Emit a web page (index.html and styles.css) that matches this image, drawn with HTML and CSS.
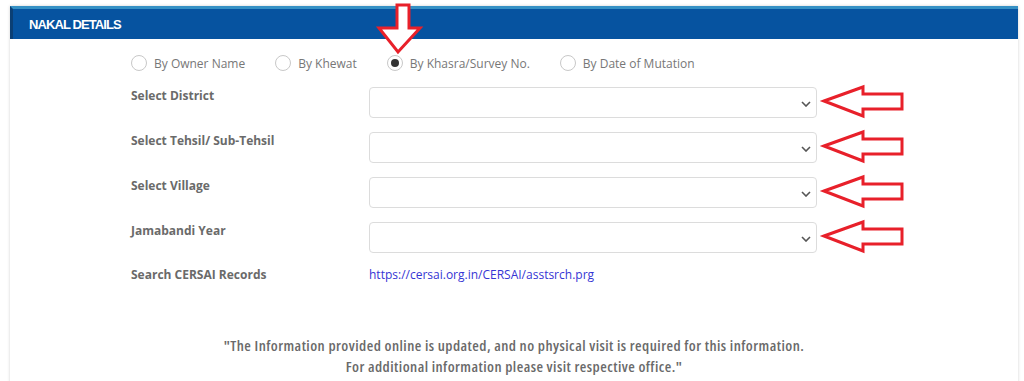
FILE: index.html
```html
<!DOCTYPE html>
<html lang="en">
<head>
<meta charset="utf-8">
<title>Nakal Details</title>
<link rel="stylesheet" href="styles.css">
</head>
<body>
<div class="page">
  <div class="panel">
    <div class="panel-head">NAKAL DETAILS</div>
    <div class="panel-body">
      <div class="radios">
        <label class="radio"><span class="dot"></span>By Owner Name</label>
        <label class="radio"><span class="dot"></span>By Khewat</label>
        <label class="radio"><span class="dot checked"></span>By Khasra/Survey No.</label>
        <label class="radio"><span class="dot"></span>By Date of Mutation</label>
      </div>

      <div class="form-row">
        <div class="label">Select District</div>
        <div class="select"><svg class="chev" viewBox="0 0 10 6" width="10" height="6"><path d="M1 1 L5 5 L9 1" fill="none" stroke="#555" stroke-width="1.6"/></svg></div>
        <svg class="arrow-left" viewBox="0 0 86 34" width="86" height="34"><path d="M4 16 L43 2 L43 9 L82 9 L82 24 L43 24 L43 31 Z" fill="#fff" stroke="#e8202a" stroke-width="3"/></svg>
      </div>

      <div class="form-row">
        <div class="label">Select Tehsil/ Sub-Tehsil</div>
        <div class="select"><svg class="chev" viewBox="0 0 10 6" width="10" height="6"><path d="M1 1 L5 5 L9 1" fill="none" stroke="#555" stroke-width="1.6"/></svg></div>
        <svg class="arrow-left" viewBox="0 0 86 34" width="86" height="34"><path d="M4 16 L43 2 L43 9 L82 9 L82 24 L43 24 L43 31 Z" fill="#fff" stroke="#e8202a" stroke-width="3"/></svg>
      </div>

      <div class="form-row">
        <div class="label">Select Village</div>
        <div class="select"><svg class="chev" viewBox="0 0 10 6" width="10" height="6"><path d="M1 1 L5 5 L9 1" fill="none" stroke="#555" stroke-width="1.6"/></svg></div>
        <svg class="arrow-left" viewBox="0 0 86 34" width="86" height="34"><path d="M4 16 L43 2 L43 9 L82 9 L82 24 L43 24 L43 31 Z" fill="#fff" stroke="#e8202a" stroke-width="3"/></svg>
      </div>

      <div class="form-row">
        <div class="label">Jamabandi Year</div>
        <div class="select"><svg class="chev" viewBox="0 0 10 6" width="10" height="6"><path d="M1 1 L5 5 L9 1" fill="none" stroke="#555" stroke-width="1.6"/></svg></div>
        <svg class="arrow-left" viewBox="0 0 86 34" width="86" height="34"><path d="M4 16 L43 2 L43 9 L82 9 L82 24 L43 24 L43 31 Z" fill="#fff" stroke="#e8202a" stroke-width="3"/></svg>
      </div>

      <div class="form-row link-row">
        <div class="label">Search CERSAI Records</div>
        <a class="link" href="#">https://cersai.org.in/CERSAI/asstsrch.prg</a>
      </div>

      <p class="note">"The Information provided online is updated, and no physical visit is required for this information.<br>For additional information please visit respective office."</p>
    </div>
  </div>
  <svg class="arrow-down" viewBox="0 0 46 52" width="46" height="52"><path d="M20 2 L32 2 L32 25 L43 25 L21 49 L2 25 L20 25 Z" fill="#fff" stroke="#e8202a" stroke-width="3"/></svg>
</div>
</body>
</html>
```

FILE: styles.css
```css
html, body {
  margin: 0;
  padding: 0;
  background: #ffffff;
}

.page {
  position: relative;
  width: 1024px;
  height: 381px;
  overflow: hidden;
  font-family: "Open Sans", "Liberation Sans", sans-serif;
}

.panel {
  margin: 6px 0 0 10px;
  width: 1008px;
  background: #fff;
  box-shadow: 0 0 3px rgba(0, 0, 0, 0.18);
  min-height: 400px;
}

.panel-head {
  height: 30px;
  background: #0653a0;
  border-top: 3px solid #3590c4;
  border-left: 3px solid #0b3f74;
  color: #fff;
  font-family: "Liberation Sans", Arial, sans-serif;
  font-weight: bold;
  font-size: 13px;
  letter-spacing: -0.9px;
  line-height: 31px;
  padding-left: 16px;
}

.panel-body {
  padding: 16px 0 0 121px;
}

.radios {
  display: flex;
  align-items: center;
  gap: 30px;
  height: 16px;
  margin-bottom: 16px;
}

.radio {
  display: flex;
  align-items: center;
  gap: 7px;
  font-size: 12px;
  color: #777;
  white-space: nowrap;
}

.dot {
  width: 14px;
  height: 14px;
  border: 1px solid #c8c8c8;
  border-radius: 50%;
  box-sizing: content-box;
  display: flex;
  align-items: center;
  justify-content: center;
}

.dot.checked::after {
  content: "";
  width: 8px;
  height: 8px;
  border-radius: 50%;
  background: #333;
}

.form-row {
  display: flex;
  align-items: flex-start;
  height: 31px;
  margin-bottom: 14px;
}

.label {
  width: 238px;
  font-size: 12px;
  font-weight: bold;
  color: #6a6a6a;
  white-space: nowrap;
}

.select {
  position: relative;
  box-sizing: border-box;
  width: 448px;
  height: 31px;
  border: 1px solid #dcdcdc;
  border-radius: 4px;
  background: #fff;
}

.chev {
  position: absolute;
  right: 5px;
  top: 13px;
}

.arrow-left {
  margin-left: 3px;
  margin-top: -2px;
  overflow: visible;
}

.link-row {
  height: 18px;
  margin-top: -2px;
  margin-bottom: 0;
  align-items: center;
}

.link {
  font-size: 12px;
  color: #3535d4;
  text-decoration: none;
}

.note {
  margin: 52px 0 0 -121px;
  width: 1008px;
  text-align: center;
  font-size: 15px;
  font-weight: 600;
  font-stretch: 75%;
  letter-spacing: 0.45px;
  line-height: 21px;
  color: #6a6a6a;
}

.arrow-down {
  position: absolute;
  left: 377px;
  top: 3px;
  overflow: visible;
}
```
